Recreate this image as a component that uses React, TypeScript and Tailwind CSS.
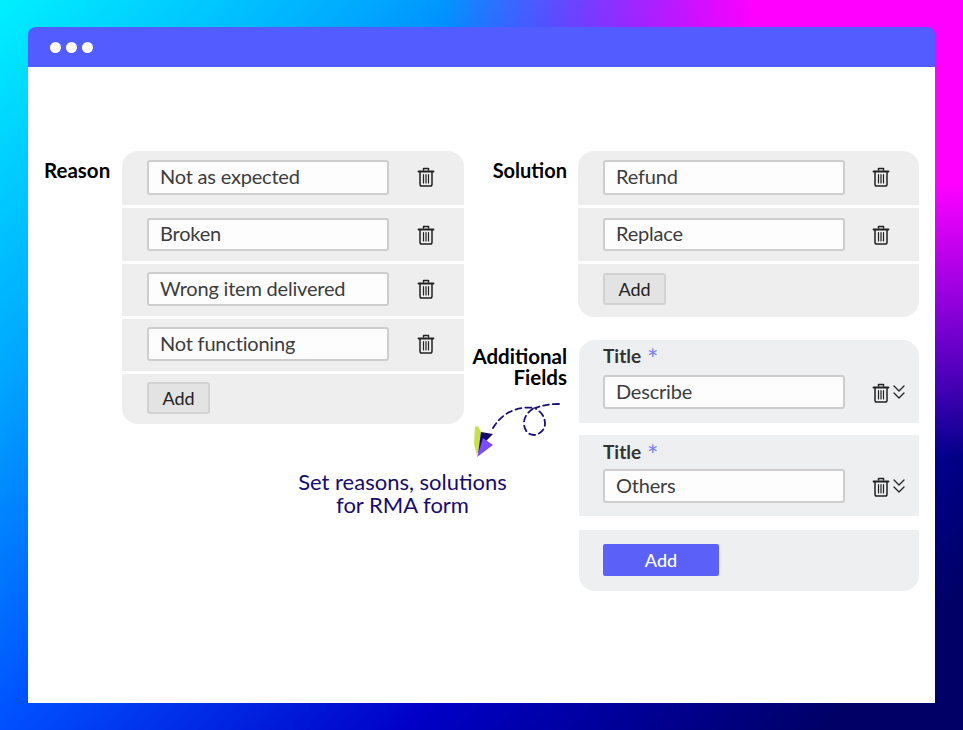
import { ChevronsDown } from 'lucide-react';

const reasons = [
  { value: 'Not as expected', row: 'h-[54px] pt-[9px] rounded-t-2xl', input: 'h-[35px]' },
  { value: 'Broken', row: 'h-[53px] pt-[10px]', input: 'h-[33px]' },
  { value: 'Wrong item delivered', row: 'h-[52px] pt-[8px]', input: 'h-[34px]' },
  { value: 'Not functioning', row: 'h-[52px] pt-[8px]', input: 'h-[34px]' },
];

const solutions = [
  { value: 'Refund', row: 'h-[54px] pt-[9px] rounded-t-2xl', input: 'h-[35px]' },
  { value: 'Replace', row: 'h-[53px] pt-[10px]', input: 'h-[33px]' },
];

function TrashIcon() {
  return (
    <svg width="18" height="20" viewBox="0 0 18 20" fill="none" stroke="#222" strokeWidth="1.5" strokeLinecap="round" strokeLinejoin="round">
      <path d="M1.5 4.5h15" strokeWidth="1.8" />
      <path d="M6.5 3V1.5h5V3" />
      <path d="M3 5v12.2c0 1 .7 1.8 1.7 1.8h8.6c1 0 1.7-.8 1.7-1.8V5" />
      <path d="M6.5 7.5v8.5M9 7.5v8.5M11.5 7.5v8.5" strokeWidth="1.2" />
    </svg>
  );
}

function TextBox({ value, className }: { value: string; className: string }) {
  return (
    <input
      readOnly
      value={value}
      className={`w-[242px] rounded-[3px] border-2 border-[#cdcdcd] bg-[#fdfdfd] pb-[3px] pl-[11px] text-[20px] tracking-[-0.2px] text-[#3c3c3c] outline-none ${className}`}
    />
  );
}

function OptionRow({ value, row, input, iconGap }: { value: string; row: string; input: string; iconGap: string }) {
  return (
    <div className={`flex items-start bg-[#eeeeee] pl-[25px] ${row}`}>
      <TextBox value={value} className={input} />
      <div className={`pt-[7px] ${iconGap}`}>
        <TrashIcon />
      </div>
    </div>
  );
}

function FieldRow({ value, row, top, inputGap }: { value: string; row: string; top: string; inputGap: string }) {
  return (
    <div className={`bg-[#eeeff0] pl-[24px] ${row}`}>
      <div className={`flex h-[27px] items-start text-[19px] leading-[22px] font-bold text-[#333] ${top}`}>
        Title <span className="ml-[6px] text-[27px] leading-[28px] font-normal text-[#7b80f5]">*</span>
      </div>
      <div className={`flex items-start ${inputGap}`}>
        <TextBox value={value} className="h-[34px]" />
        <div className="ml-[27px] flex items-center pt-[7px]">
          <TrashIcon />
          <ChevronsDown className="-mt-[2px] -ml-[3px] h-[24px] w-[24px] text-[#222]" strokeWidth={1.3} />
        </div>
      </div>
    </div>
  );
}

function Arrow() {
  return (
    <svg width="100" height="70" viewBox="0 0 100 70" fill="none" className="mt-[6px] ml-px">
      <path
        d="M94 10C85 10 78 11 70 14C76 18 80 22 80 30C80 36 74 41 69 41C63 41 59 36 59 29C59 22 64 17 69 14C55 12 38 17 28 34"
        stroke="#1a0f78"
        strokeWidth="1.8"
        strokeDasharray="6 4"
        strokeLinecap="round"
      />
      <path d="M10 33L13 32L17 40L12 62L9 50Z" fill="#c8e04a" />
      <path d="M16 38L28 40L21 47L13 60Z" fill="#140a70" />
      <path d="M18 44L28 51L12 63Z" fill="#7d4dfa" />
    </svg>
  );
}

export default function App() {
  return (
    <div className="h-[730px] w-[963px] overflow-hidden bg-[radial-gradient(ellipse_520px_460px_at_100%_0%,#ff00ff_0%,#ff00ff_40%,rgba(255,0,255,0)_100%),linear-gradient(135deg,#00f0ff_0%,#00a8ff_22%,#0050ff_43%,#0000c8_67%,#000066_92%)] pt-[27px] pl-[28px] font-['Lato','Liberation_Sans',sans-serif]">
      <div className="flex h-[676px] w-[907px] flex-col">
        <div className="flex h-[40px] items-center gap-[5px] rounded-t-[8px] bg-[#535cff] pl-[22px]">
          <span className="h-[11px] w-[11px] rounded-full bg-white" />
          <span className="h-[11px] w-[11px] rounded-full bg-white" />
          <span className="h-[11px] w-[11px] rounded-full bg-white" />
        </div>

        <div className="flex flex-1 bg-white pt-[84px]">
          <div className="w-[436px] pl-[16px]">
            <div className="flex">
              <div className="w-[78px] pt-[7px] text-[20.5px] leading-6 font-bold text-black">Reason</div>
              <div className="flex w-[342px] flex-col gap-[3px]">
                {reasons.map((r) => (
                  <OptionRow key={r.value} value={r.value} row={r.row} input={r.input} iconGap="ml-[28px]" />
                ))}
                <div className="h-[50px] rounded-b-2xl bg-[#eeeeee] pt-[8px] pl-[25px]">
                  <button className="h-[32px] w-[63px] rounded-[3px] border-2 border-[#d2d2d2] bg-[#e3e3e3] text-[18px] text-[#222]">Add</button>
                </div>
              </div>
            </div>
            <p className="mt-[46px] ml-[254px] w-[209px] text-center text-[22px] leading-[23px] text-[#170c6e]">
              Set reasons, solutions for RMA form
            </p>
          </div>

          <div>
            <div className="flex">
              <div className="w-[103px] pt-[7px] text-right text-[20px] leading-6 font-bold text-black">Solution</div>
              <div className="ml-[11px] flex w-[341px] flex-col gap-[3px]">
                {solutions.map((s) => (
                  <OptionRow key={s.value} value={s.value} row={s.row} input={s.input} iconGap="ml-[27px]" />
                ))}
                <div className="h-[53px] rounded-b-2xl bg-[#eeeeee] pt-[9px] pl-[25px]">
                  <button className="h-[32px] w-[63px] rounded-[3px] border-2 border-[#d2d2d2] bg-[#e3e3e3] text-[18px] text-[#222]">Add</button>
                </div>
              </div>
            </div>

            <div className="mt-[23px] flex">
              <div className="w-[103px]">
                <div className="pt-[6px] text-right text-[20.5px] leading-[21px] font-bold whitespace-nowrap text-black">
                  <div>Additional</div>
                  <div>Fields</div>
                </div>
                <Arrow />
              </div>
              <div className="ml-[12px] flex w-[340px] flex-col">
                <FieldRow value="Describe" row="h-[83px] rounded-t-2xl" top="pt-[5px]" inputGap="mt-[8px]" />
                <div className="mt-[12px]">
                  <FieldRow value="Others" row="h-[81px]" top="pt-[6px]" inputGap="mt-[7px]" />
                </div>
                <div className="mt-[14px] h-[61px] rounded-b-2xl bg-[#eeeff0] pt-[14px] pl-[24px]">
                  <button className="h-[32px] w-[116px] rounded-[2px] bg-[#5a60f8] text-[18px] font-medium text-white">Add</button>
                </div>
              </div>
            </div>
          </div>
        </div>
      </div>
    </div>
  );
}
